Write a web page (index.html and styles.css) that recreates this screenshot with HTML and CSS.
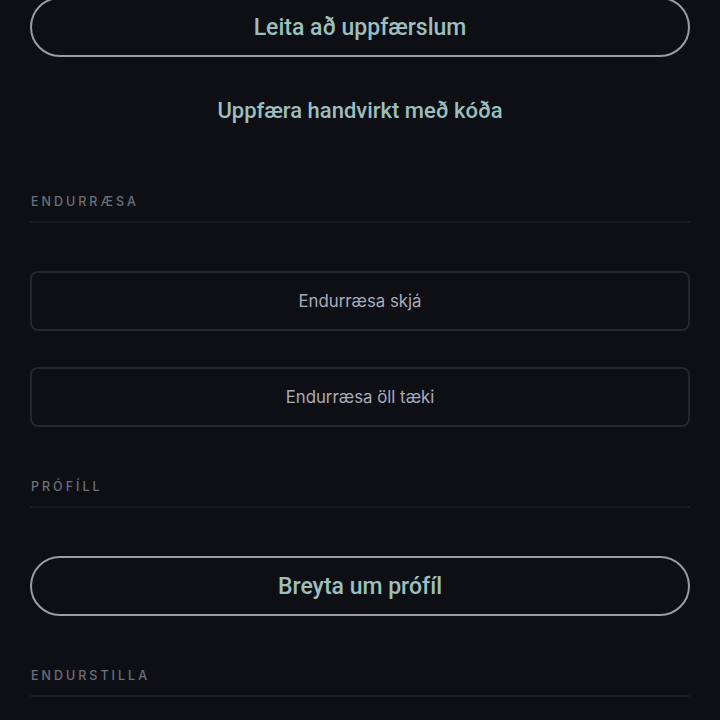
FILE: index.html
```html
<!DOCTYPE html>
<html lang="is">
<head>
<meta charset="utf-8">
<title>Stillingar</title>
<link rel="stylesheet" href="styles.css">
</head>
<body>
<main class="page">
  <button class="pill pill-first">Leita að uppfærslum</button>
  <button class="link">Uppfæra handvirkt með kóða</button>

  <h2 class="section-head section-head-after-link">Endurræsa</h2>
  <button class="outline">Endurræsa skjá</button>
  <button class="outline outline-next">Endurræsa öll tæki</button>

  <h2 class="section-head">Prófíll</h2>
  <button class="pill">Breyta um prófíl</button>

  <h2 class="section-head">Endurstilla</h2>
</main>
</body>
</html>
```

FILE: styles.css
```css
html, body {
  margin: 0;
  padding: 0;
  background: #0e0f14;
  height: 100%;
  overflow: hidden;
}

.page {
  display: flex;
  flex-direction: column;
  padding: 0 30px;
}

button {
  margin: 0;
  padding: 0;
  background: transparent;
  cursor: pointer;
}

.pill {
  box-sizing: border-box;
  height: 60px;
  width: 100%;
  border: 2px solid #9d9ba1;
  border-radius: 30px;
  color: #9cbfbe;
  font-family: Roboto, "Liberation Sans", sans-serif;
  font-weight: 500;
  font-size: 23px;
  display: flex;
  align-items: center;
  justify-content: center;
}

.pill-first {
  margin-top: -3px;
}

.link {
  margin-top: 30px;
  height: 48px;
  border: none;
  color: #9cbfbe;
  font-family: Roboto, "Liberation Sans", sans-serif;
  font-weight: 500;
  font-size: 22px;
  line-height: 48px;
  text-align: center;
}

.section-head {
  margin: 51px 0 48px;
  padding: 1px 0 11px 1px;
  height: 16px;
  line-height: 16px;
  border-bottom: 2px solid #1a1b21;
  color: #6b6f7b;
  font-family: Inter, "Noto Sans", sans-serif;
  font-weight: 500;
  font-size: 12.5px;
  letter-spacing: 3px;
  text-transform: uppercase;
}

.section-head-after-link {
  margin-top: 58px;
}

.outline {
  box-sizing: border-box;
  height: 60px;
  width: 100%;
  border: 2px solid #25272d;
  border-radius: 8px;
  color: #a8acbb;
  font-family: Inter, "Noto Sans", sans-serif;
  font-weight: 400;
  font-size: 16.8px;
  display: flex;
  align-items: center;
  justify-content: center;
}

.outline-next {
  margin-top: 36px;
}
```
